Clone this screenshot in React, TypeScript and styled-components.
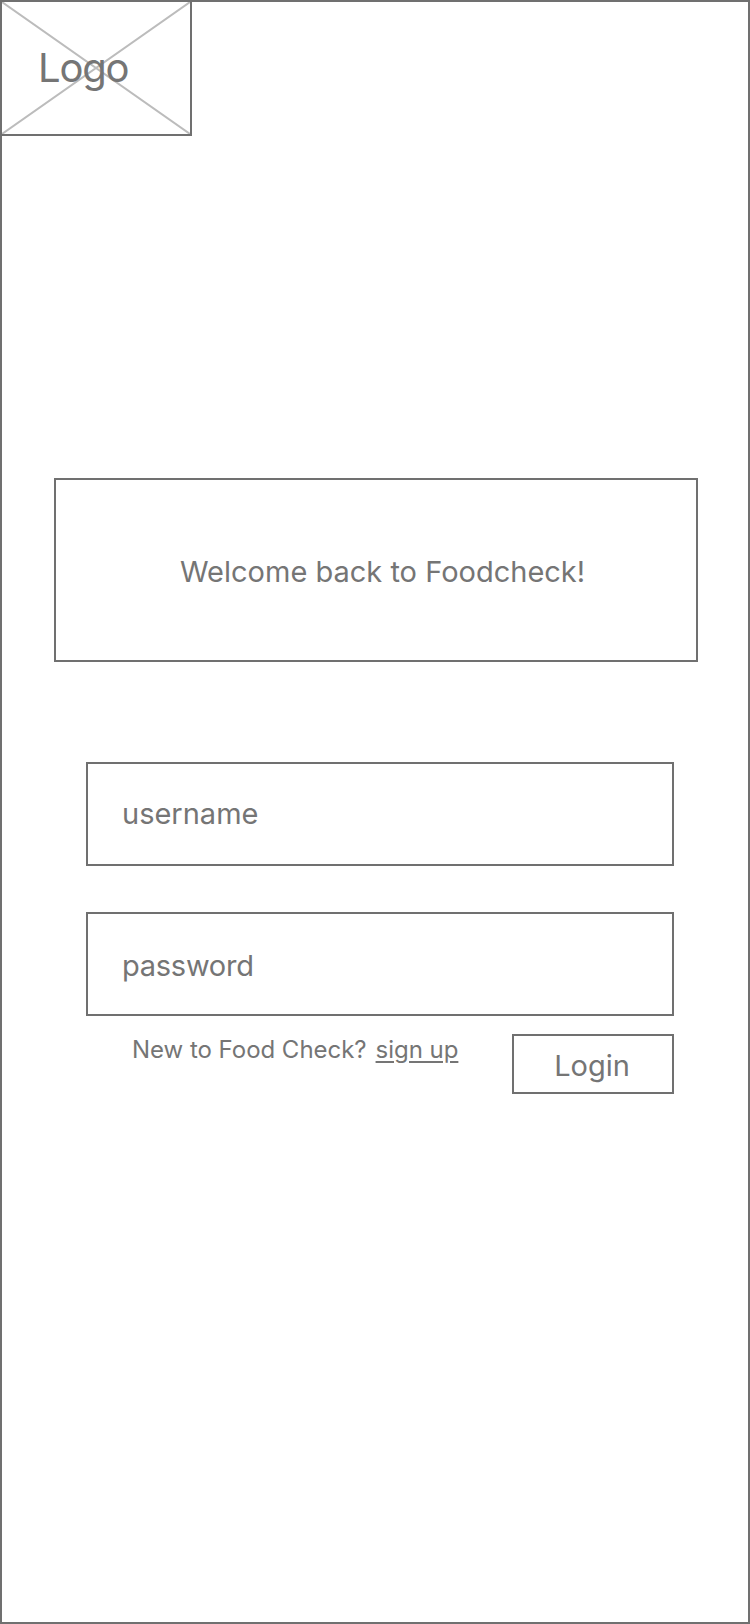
import React from "react";
import styled, { createGlobalStyle } from "styled-components";

const Global = createGlobalStyle`
  html, body { margin: 0; padding: 0; background: #fff; }
  body { font-family: Inter, "Liberation Sans", sans-serif; color: #757575; font-weight: 400; }
`;

const Page = styled.main`
  width: 750px;
  height: 1624px;
  box-sizing: border-box;
  box-shadow: inset 0 0 0 2px #707070;
  display: flex;
  flex-direction: column;
`;

const LogoBox = styled.div`
  position: relative;
  width: 192px;
  height: 136px;
  box-sizing: border-box;
  border: 2px solid #707070;
  display: flex;
  align-items: center;
  padding-left: 36px;
`;

const LogoCross = styled.svg`
  position: absolute;
  inset: 0;
  width: 100%;
  height: 100%;
`;

const LogoText = styled.span`
  position: relative;
  font-size: 40px;
  line-height: 48px;
  letter-spacing: -1.2px;
`;

const Banner = styled.section`
  width: 644px;
  height: 184px;
  box-sizing: border-box;
  margin: 342px 0 0 54px;
  border: 2px solid #707070;
  padding: 4px 0 0 124px;
  display: flex;
  align-items: center;
  font-size: 29px;
  line-height: 34px;
`;

const Form = styled.form`
  width: 588px;
  margin: 100px 0 0 86px;
  display: flex;
  flex-direction: column;
  gap: 46px;
`;

const Field = styled.div<{ $nudge?: number; $tracking?: number }>`
  height: 104px;
  box-sizing: border-box;
  border: 2px solid #707070;
  padding: ${(p) => p.$nudge ?? 0}px 0 0 34px;
  display: flex;
  align-items: center;
  font-size: 29px;
  line-height: 36px;
  letter-spacing: ${(p) => p.$tracking ?? 0}px;
`;

const FieldStack = styled.div`
  display: flex;
  flex-direction: column;
  gap: 46px;
`;

const Footer = styled.div`
  display: flex;
  justify-content: space-between;
  align-items: flex-start;
  margin-top: -28px;
`;

const Prompt = styled.p`
  margin: 0 0 0 46px;
  padding-top: 1px;
  display: flex;
  gap: 9px;
  font-size: 24px;
  line-height: 30px;
  letter-spacing: -0.03px;
`;

const SignUp = styled.a`
  color: inherit;
  text-decoration: underline;
  text-underline-offset: 3px;
`;

const Login = styled.button`
  width: 162px;
  height: 60px;
  box-sizing: border-box;
  border: 2px solid #707070;
  background: none;
  color: inherit;
  font: inherit;
  font-size: 29px;
  line-height: 36px;
  padding: 4px 2px 0 0;
`;

export default function App() {
  return (
    <Page>
      <Global />
      <LogoBox>
        <LogoCross viewBox="0 0 192 136" preserveAspectRatio="none">
          <path d="M0 0 192 136M192 0 0 136" stroke="#bcbcbc" strokeWidth="2" fill="none" />
        </LogoCross>
        <LogoText>Logo</LogoText>
      </LogoBox>
      <Banner>Welcome back to Foodcheck!</Banner>
      <Form>
        <FieldStack>
          <Field>username</Field>
          <Field $nudge={4} $tracking={-0.26}>password</Field>
        </FieldStack>
        <Footer>
          <Prompt>
            New to Food Check? <SignUp>sign up</SignUp>
          </Prompt>
          <Login type="button">Login</Login>
        </Footer>
      </Form>
    </Page>
  );
}
